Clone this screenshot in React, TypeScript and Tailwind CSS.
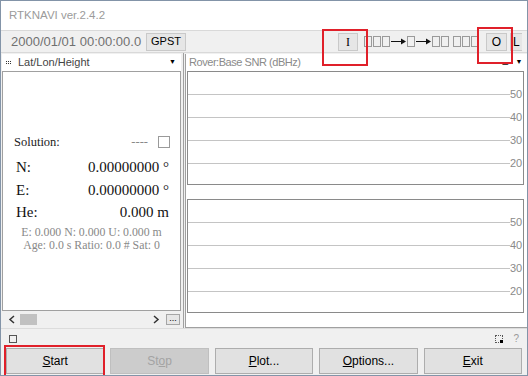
import React from 'react';

const sans = { fontFamily: '"Liberation Sans", Arial, sans-serif' };
const serif = { fontFamily: '"Liberation Serif", "Times New Roman", serif' };

function Tofu() {
    return <span className="inline-block w-[8px] h-[11px] border border-[#9a9a9a] mr-[1px]"></span>;
}

function Arrow() {
    return (
        <svg width="16" height="7" viewBox="0 0 16 7">
            <line x1="0" y1="3.5" x2="11" y2="3.5" stroke="#111" strokeWidth="1" />
            <polygon points="10,0.5 15,3.5 10,6.5" fill="#111" />
        </svg>
    );
}

function SnrChart() {
    const levels = ['50', '40', '30', '20'];
    return (
        <div className="h-[114px] border border-[#8a8a8a] bg-white pt-[11px]">
            {levels.map((l) => (
                <div key={l} className="h-[23px] flex items-center">
                    <div className="flex-1 h-px bg-[#c4c4c4]"></div>
                    <span className="w-[13px] text-[11px] leading-none text-[#8a8a8a]" style={sans}>{l}</span>
                </div>
            ))}
        </div>
    );
}

function Btn({ label, u, rest, disabled }: { label?: string; u: string; rest: string; disabled?: boolean }) {
    return (
        <button
            className={`h-[26px] border text-[12px] ${disabled ? 'bg-[#cccccc] border-[#bfbfbf] text-[#a3a3a3]' : 'bg-[#e1e1e1] border-[#adadad] text-black'}`}
            style={sans}
        >
            {label}<span className="underline">{u}</span>{rest}
        </button>
    );
}

export default function App() {
    return (
        <div className="relative w-[528px] h-[376px] border border-[#8394a8] bg-[#f0f0f0] flex flex-col overflow-hidden" style={sans}>
            {/* title */}
            <div className="h-[29px] bg-white flex items-center pl-[8px] text-[11.5px] text-[#9b9b9b]">RTKNAVI ver.2.4.2</div>

            {/* toolbar */}
            <div className="h-[23px] border-y border-[#d9d9d9] flex items-center pl-[10px] pr-[5px]">
                <span className="text-[13px] text-[#707070] w-[135px]">2000/01/01 00:00:00.0</span>
                <span className="h-[18px] px-[4px] flex items-center bg-[#e6e6e6] border border-[#c9c9c9] text-[11px] text-black">GPST</span>
                <div className="flex-1"></div>
                <span className="h-[18px] w-[20px] flex items-center justify-center bg-[#e6e6e6] border border-[#c9c9c9] text-[12px] text-black" style={serif}>I</span>
                <div className="flex items-center ml-[6px]">
                    <Tofu /><Tofu /><Tofu />
                    <Arrow />
                    <Tofu />
                    <Arrow />
                    <Tofu /><Tofu />
                    <span className="w-[3px]"></span>
                    <Tofu /><Tofu /><Tofu />
                </div>
                <span className="ml-[6px] h-[18px] w-[21px] flex items-center justify-center bg-[#e6e6e6] border border-[#c9c9c9] text-[12px] text-black">O</span>
                <span className="ml-[3px] h-[18px] w-[12px] flex items-center pl-[2px] bg-[#e6e6e6] border-y border-l border-[#c9c9c9] text-[12px] text-black">L</span>
            </div>

            {/* body */}
            <div className="h-[275px] flex">
                {/* left */}
                <div className="w-[180px] pl-[1px] pt-px flex flex-col">
                    <div className="h-[17px] bg-white flex items-center pl-[4px] pr-[5px] text-[11px] text-[#444]">
                        <span className="grid grid-cols-3 gap-[1px] mr-[7px]">
                            {[0, 1, 2, 3, 4, 5].map((i) => <span key={i} className="w-px h-px bg-[#333]"></span>)}
                        </span>
                        <span className="flex-1">Lat/Lon/Height</span>
                        <span className="text-[7px] text-black">▼</span>
                    </div>
                    <div className="h-[240px] bg-white border border-[#a0a0a0] flex flex-col pt-[62px]" style={serif}>
                        <div className="h-[16px] flex items-center pl-[11px] pr-[10px] text-[12.5px] text-[#222]">
                            <span className="flex-1">Solution:</span>
                            <span className="text-[#888] mr-[10px]">----</span>
                            <span className="w-[12px] h-[12px] border border-[#9a9a9a]"></span>
                        </div>
                        <div className="mt-[6px] flex flex-col text-[15px] text-[#111] pl-[13px] pr-[11px]">
                            <div className="h-[23px] flex items-center justify-between"><span>N:</span><span>0.00000000 °</span></div>
                            <div className="h-[22px] flex items-center justify-between"><span>E:</span><span>0.00000000 °</span></div>
                            <div className="h-[23px] flex items-center justify-between"><span>He:</span><span>0.000 m</span></div>
                        </div>
                        <div className="mt-[2px] text-center text-[11.8px] leading-[13px] text-[#888]">
                            <div>E: 0.000 N: 0.000 U: 0.000 m</div>
                            <div>Age: 0.0 s Ratio: 0.0 # Sat: 0</div>
                        </div>
                    </div>
                    <div className="h-[17px] flex items-center pl-[6px] pr-[1px]">
                        <svg width="8" height="9" viewBox="0 0 8 9"><polyline points="6,1 2,4.5 6,8" fill="none" stroke="#333" strokeWidth="1.5" /></svg>
                        <span className="ml-[4px] w-[17px] h-[11px] bg-[#c1c1c1]"></span>
                        <div className="flex-1"></div>
                        <svg width="8" height="9" viewBox="0 0 8 9"><polyline points="2,1 6,4.5 2,8" fill="none" stroke="#333" strokeWidth="1.5" /></svg>
                        <span className="ml-[6px] w-[14px] h-[11px] bg-[#e6e6e6] border border-[#a5a5a5] text-[9px] leading-[6px] text-center text-black">...</span>
                    </div>
                </div>

                {/* splitter */}
                <div className="w-[4px] flex justify-end">
                    <div className="w-px bg-[#a0a0a0] mr-px"></div>
                </div>

                {/* right */}
                <div className="flex-1 pt-px flex flex-col">
                    <div className="h-[17px] bg-white border-l border-[#a0a0a0] flex items-center pl-[3px] pr-[5px] text-[11px] tracking-[-0.45px] text-[#8a8a8a]">
                        <span className="flex-1">Rover:Base SNR (dBHz)</span>
                        <span className="text-black text-[10px] leading-none mr-[8px] -mt-[6px]">_</span>
                        <span className="text-[7px] text-black">▼</span>
                    </div>
                    <div className="flex-1 bg-white border-l border-b border-[#a0a0a0] pl-[1px] pr-[3px] flex flex-col">
                        <SnrChart />
                        <div className="h-[14px]"></div>
                        <SnrChart />
                    </div>
                </div>
            </div>

            {/* status */}
            <div className="h-[20px] flex items-center pl-[8px] pr-[8px] border-t border-[#dcdcdc]">
                <span className="w-[8px] h-[8px] border border-[#555]"></span>
                <div className="flex-1"></div>
                <span className="w-[8px] h-[8px] border border-dotted border-[#555] relative mr-[10px]">
                    <span className="absolute right-[-1px] bottom-[-1px] w-[3px] h-[3px] bg-black"></span>
                </span>
                <span className="text-[10px] text-[#9a9a9a]">?</span>
            </div>

            {/* buttons */}
            <div className="h-[27px] grid grid-cols-5 gap-[6px] px-[5px] pb-px">
                <Btn u="S" rest="tart" />
                <Btn label="St" u="o" rest="p" disabled />
                <Btn u="P" rest="lot..." />
                <Btn u="O" rest="ptions..." />
                <Btn u="E" rest="xit" />
            </div>

            {/* annotation boxes */}
            <div className="absolute left-[321px] top-[28px] w-[46px] h-[37px] border-2 border-[#e0202a]"></div>
            <div className="absolute left-[476px] top-[26px] w-[36px] h-[37px] border-2 border-[#e0202a]"></div>
            <div className="absolute left-[3px] top-[344px] w-[101px] h-[32px] border-2 border-[#e0202a]"></div>
        </div>
    );
}
